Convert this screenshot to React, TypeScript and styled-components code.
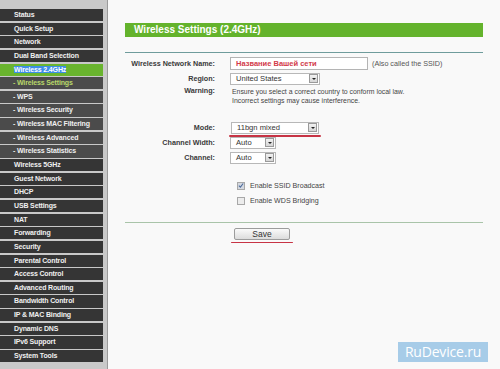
import React from 'react';
import styled, { createGlobalStyle } from 'styled-components';

const GlobalStyle = createGlobalStyle`
  html, body {
    margin: 0;
    padding: 0;
    background: #f9f9f9;
  }
  body {
    font-family: 'Liberation Sans', Arial, sans-serif;
  }
`;

type MenuItem = { label: string; sub?: boolean; active?: boolean; current?: boolean };

const menu: MenuItem[] = [
  { label: 'Status' },
  { label: 'Quick Setup' },
  { label: 'Network' },
  { label: 'Dual Band Selection' },
  { label: 'Wireless 2.4GHz', active: true },
  { label: 'Wireless Settings', sub: true, current: true },
  { label: 'WPS', sub: true },
  { label: 'Wireless Security', sub: true },
  { label: 'Wireless MAC Filtering', sub: true },
  { label: 'Wireless Advanced', sub: true },
  { label: 'Wireless Statistics', sub: true },
  { label: 'Wireless 5GHz' },
  { label: 'Guest Network' },
  { label: 'DHCP' },
  { label: 'USB Settings' },
  { label: 'NAT' },
  { label: 'Forwarding' },
  { label: 'Security' },
  { label: 'Parental Control' },
  { label: 'Access Control' },
  { label: 'Advanced Routing' },
  { label: 'Bandwidth Control' },
  { label: 'IP & MAC Binding' },
  { label: 'Dynamic DNS' },
  { label: 'IPv6 Support' },
  { label: 'System Tools' },
];

export default function App() {
  return (
    <Page>
      <GlobalStyle />
      <Sidebar>
        {menu.map((m) => (
          <NavItem key={m.label} $sub={m.sub} $active={m.active} $current={m.current}>
            {m.sub ? `- ${m.label}` : m.active ? <Selected>{m.label}</Selected> : m.label}
          </NavItem>
        ))}
      </Sidebar>
      <Main>
        <Header>Wireless Settings (2.4GHz)</Header>
        <Rule $color="#6f9c9c" />
        <Form>
          <Row>
            <Label>Wireless Network Name:</Label>
            <Field>
              <TextBox>Название Вашей сети</TextBox>
              <Hint>(Also called the SSID)</Hint>
            </Field>
          </Row>
          <Row>
            <Label>Region:</Label>
            <Field>
              <Select $width={90}>
                <span>United States</span>
                <Arrow />
              </Select>
            </Field>
          </Row>
          <WarnRow>
            <Label>Warning:</Label>
            <Note>
              Ensure you select a correct country to conform local law.
              <br />
              Incorrect settings may cause interference.
            </Note>
          </WarnRow>
          <Row $top={16}>
            <Label>Mode:</Label>
            <Field>
              <Marked $width={90}>
                <Select $width={88}>
                  <span>11bgn mixed</span>
                  <Arrow />
                </Select>
              </Marked>
            </Field>
          </Row>
          <Row>
            <Label>Channel Width:</Label>
            <Field>
              <Select $width={46}>
                <span>Auto</span>
                <Arrow />
              </Select>
            </Field>
          </Row>
          <Row>
            <Label>Channel:</Label>
            <Field>
              <Select $width={46}>
                <span>Auto</span>
                <Arrow />
              </Select>
            </Field>
          </Row>
          <Row $top={13}>
            <span />
            <Check>
              <Box $checked>
                <svg width="7" height="7" viewBox="0 0 7 7">
                  <path d="M1 3.6 L2.8 5.4 L6 1.2" stroke="#4a6a9a" strokeWidth="1.2" fill="none" />
                </svg>
              </Box>
              Enable SSID Broadcast
            </Check>
          </Row>
          <Row>
            <span />
            <Check>
              <Box />
              Enable WDS Bridging
            </Check>
          </Row>
        </Form>
        <Rule $color="#a9c4a9" $top={14} />
        <Actions>
          <Marked $width={60}>
            <SaveButton>Save</SaveButton>
          </Marked>
        </Actions>
      </Main>
      <Watermark>RuDevice.ru</Watermark>
    </Page>
  );
}

const Page = styled.div`
  position: relative;
  display: flex;
  width: 500px;
  height: 369px;
  overflow: hidden;
  background: #f9f9f9;
`;

const Sidebar = styled.nav`
  display: flex;
  flex-direction: column;
  gap: 1.5px;
  width: 103px;
  padding: 9px 4px 0 0;
  background: #c9c9c9;
  border-right: 1px solid #9a9a9a;
`;

const NavItem = styled.div<{ $sub?: boolean; $active?: boolean; $current?: boolean }>`
  height: 12.15px;
  line-height: 12px;
  padding-left: ${(p) => (p.$sub ? '13px' : '14px')};
  font-size: 7px;
  letter-spacing: -0.15px;
  font-weight: bold;
  white-space: nowrap;
  overflow: hidden;
  color: ${(p) => (p.$current ? '#b9d86a' : '#f0f0f0')};
  background: ${(p) => (p.$active ? '#69b42e' : p.$sub ? '#4b4b4b' : '#353535')};
`;

const Selected = styled.span`
  background: #3d8ee6;
  color: #fff;
`;

const Main = styled.main`
  display: flex;
  flex-direction: column;
  width: 358px;
  padding: 23px 0 0 17px;
`;

const Header = styled.div`
  height: 14px;
  line-height: 14px;
  padding-left: 9px;
  background: #64b32c;
  color: #fff;
  font-size: 10px;
  font-weight: bold;
`;

const Rule = styled.div<{ $color: string; $top?: number }>`
  height: 1px;
  margin-top: ${(p) => p.$top ?? 15}px;
  background: ${(p) => p.$color};
`;

const Form = styled.div`
  display: flex;
  flex-direction: column;
  margin-top: 3px;
`;

const Row = styled.div<{ $top?: number }>`
  display: grid;
  grid-template-columns: 90px 1fr;
  column-gap: 15px;
  align-items: center;
  height: 15px;
  margin-top: ${(p) => p.$top ?? 0}px;
`;

const WarnRow = styled(Row)`
  height: 18px;
  align-items: start;
`;

const Label = styled.div`
  text-align: right;
  font-size: 7.2px;
  font-weight: bold;
  color: #3a3a3a;
  white-space: nowrap;
`;

const Field = styled.div`
  display: flex;
  align-items: center;
  gap: 4px;
`;

const TextBox = styled.div`
  width: 131px;
  height: 11px;
  line-height: 11px;
  padding-left: 5px;
  border: 1px solid #b4b4b4;
  background: #fff;
  color: #d23a4a;
  font-size: 7.5px;
  font-weight: bold;
`;

const Hint = styled.span`
  font-size: 7.2px;
  color: #555;
`;

const Note = styled.div`
  font-size: 6.9px;
  line-height: 9px;
  color: #444;
  padding-top: 0.5px;
  padding-left: 2px;
  white-space: nowrap;
`;

const Select = styled.div<{ $width: number }>`
  display: flex;
  align-items: center;
  justify-content: space-between;
  box-sizing: border-box;
  width: ${(p) => p.$width}px;
  height: 12px;
  padding-left: 5px;
  border: 1px solid #b8b8b8;
  background: #fff;
  font-size: 7.6px;
  color: #333;
`;

const Arrow = styled.div`
  position: relative;
  width: 9px;
  height: 9px;
  margin-right: 1px;
  border: 1px solid #9a9a9a;
  box-sizing: border-box;
  background: linear-gradient(#f2f2f2, #d6d6d6);
  &::after {
    content: '';
    position: absolute;
    left: 1.5px;
    top: 2.5px;
    border-left: 2px solid transparent;
    border-right: 2px solid transparent;
    border-top: 2.5px solid #222;
  }
`;

const Marked = styled.div<{ $width: number }>`
  position: relative;
  display: flex;
  justify-content: center;
  width: ${(p) => p.$width}px;
  &::after {
    content: '';
    position: absolute;
    left: -1px;
    right: -1px;
    bottom: -3px;
    height: 1.5px;
    background: #c73445;
    border-radius: 1px;
  }
`;

const Check = styled.label`
  display: flex;
  align-items: center;
  gap: 5px;
  padding-left: 7px;
  font-size: 7.1px;
  color: #444;
`;

const Box = styled.span<{ $checked?: boolean }>`
  display: flex;
  align-items: center;
  justify-content: center;
  box-sizing: border-box;
  width: 8px;
  height: 8px;
  border: 1px solid #a8a8a8;
  background: ${(p) => (p.$checked ? '#d4d8e0' : '#ececec')};
`;

const Actions = styled.div`
  display: flex;
  padding-left: 107px;
  margin-top: 5px;
`;

const SaveButton = styled.button`
  width: 56px;
  height: 12px;
  padding: 0;
  border: 1px solid #9c9c9c;
  border-radius: 2px;
  background: linear-gradient(#fafafa, #dcdcdc);
  font-family: 'Liberation Sans', Arial, sans-serif;
  font-size: 8.5px;
  line-height: 10px;
  color: #333;
`;

const Watermark = styled.div`
  position: absolute;
  left: 398px;
  top: 342px;
  width: 90px;
  height: 20px;
  line-height: 20px;
  text-align: center;
  background: #a7cce8;
  color: #fff;
  font-family: 'Open Sans', 'Noto Sans', sans-serif;
  font-size: 14px;
  letter-spacing: -0.2px;
`;
